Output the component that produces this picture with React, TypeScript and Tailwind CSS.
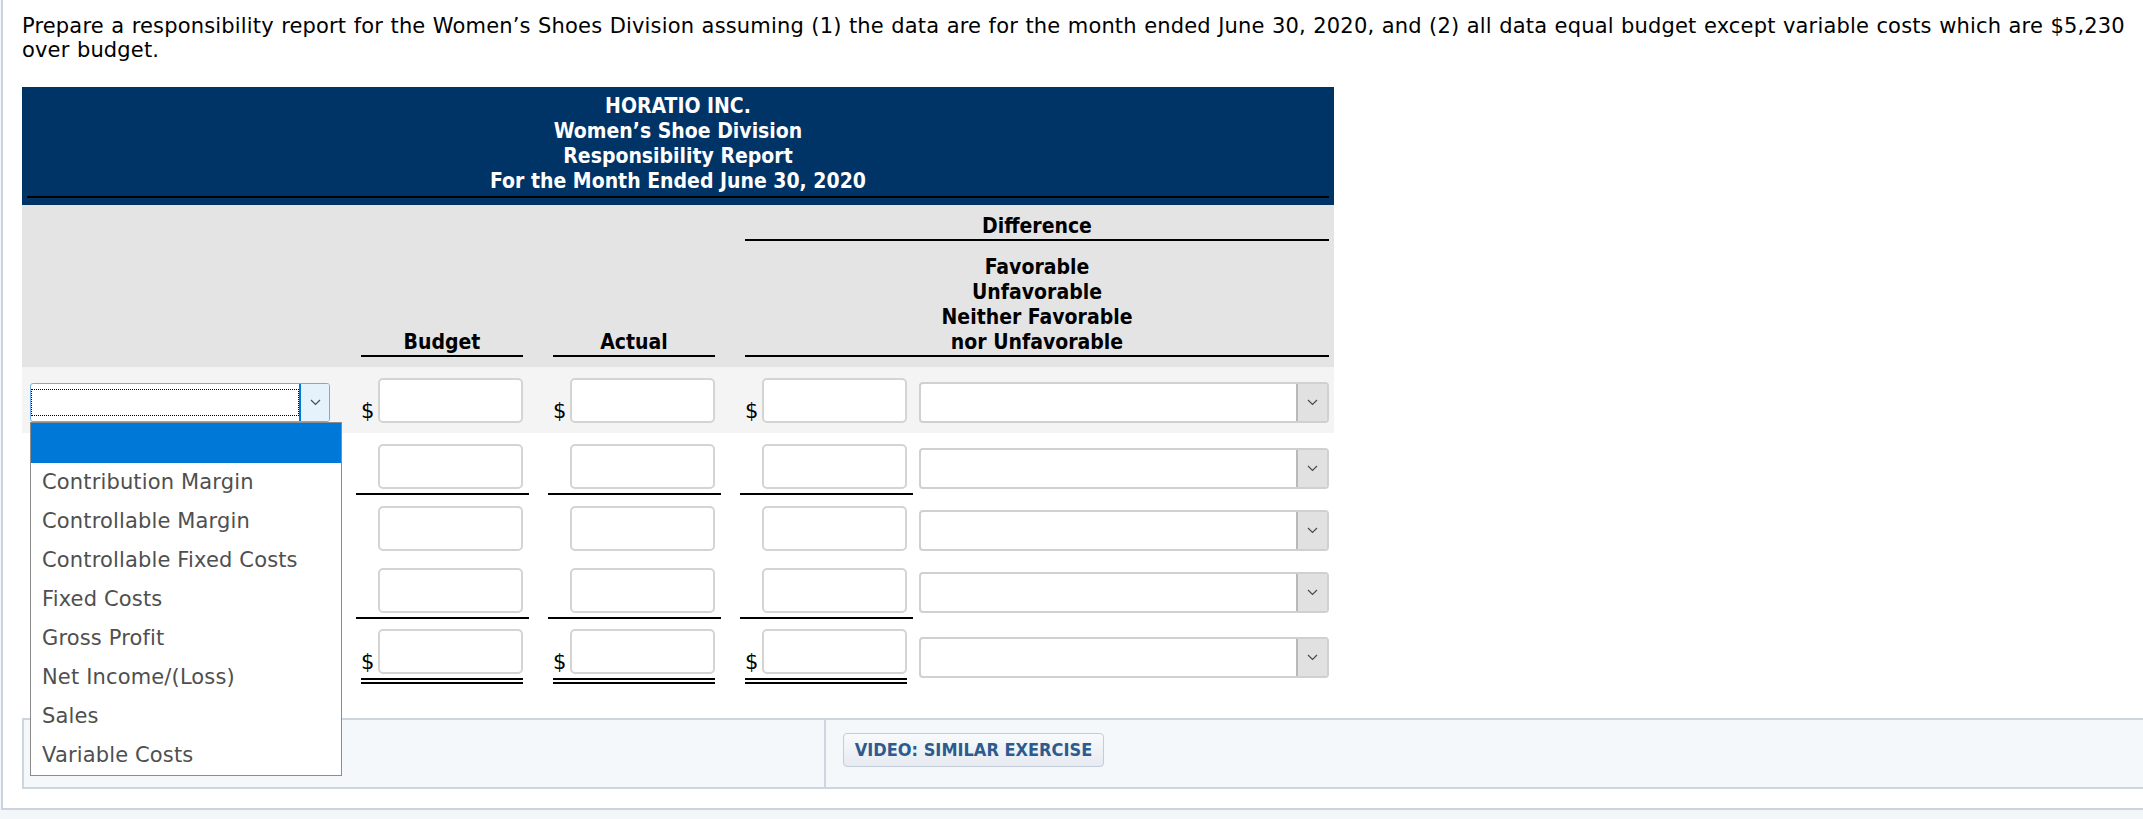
import React from "react";

const body = "font-['DejaVu_Sans','Verdana',sans-serif]";
const bold = "font-['DejaVu_Sans_Condensed','DejaVu_Sans',sans-serif] [font-stretch:condensed] font-bold";

function Chevron() {
  return (
    <svg width="11" height="7" viewBox="0 0 11 7">
      <polyline points="1,1 5.5,5.5 10,1" fill="none" stroke="#4a4a4a" strokeWidth="1.2" />
    </svg>
  );
}

function AmountInput() {
  return <div className="w-[145px] h-[45px] shrink-0 bg-white border-2 border-[#d4d4d4] rounded-[5px]" />;
}

type Line = "none" | "single" | "double";

function AmountCell({ dollar, line, pb }: { dollar: boolean; line: Line; pb: string }) {
  const wrap =
    line === "double"
      ? "ml-[15px] w-[162px] border-b-[6px] border-double border-black"
      : line === "single"
      ? "ml-[10px] w-[173px] pl-[5px] border-b-2 border-black"
      : "ml-[10px] w-[173px] pl-[5px] border-b-2 border-transparent";
  return (
    <div className={`${wrap} ${pb} flex items-end`}>
      <span className={`w-[17px] shrink-0 text-[21px] leading-[24px] text-black ${body}`}>{dollar ? "$" : ""}</span>
      <AmountInput />
    </div>
  );
}

function FuSelect({ mb }: { mb: string }) {
  return (
    <div className={`ml-[1px] ${mb} w-[410px] h-[41px] bg-white border-2 border-[#d0d0d0] rounded-[4px] flex justify-end overflow-hidden`}>
      <div className="w-[31px] h-full bg-[#e1e1e1] border-l-2 border-[#b9b9b9] flex items-center justify-center">
        <Chevron />
      </div>
    </div>
  );
}

const OPTIONS = [
  "Contribution Margin",
  "Controllable Margin",
  "Controllable Fixed Costs",
  "Fixed Costs",
  "Gross Profit",
  "Net Income/(Loss)",
  "Sales",
  "Variable Costs",
];

const cols = "grid grid-cols-[324px_192px_192px_188px_416px]";

export default function App() {
  return (
    <div className="min-h-screen bg-[#f4f7fa]">
      <div className="ml-[1px] h-[810px] bg-white border-l-2 border-b-2 border-[#cbd3de] flex flex-col pl-[19px] pt-[14px]">
        <p className={`pr-[10px] text-[21px] leading-[24px] tracking-[0.16px] [word-spacing:0.6px] text-black ${body}`}>
          Prepare a responsibility report for the Women’s Shoes Division assuming (1) the data are for the month ended June 30, 2020, and (2) all data equal budget except variable costs which are $5,230 over budget.
        </p>

        <div className="mt-[25px] w-[1312px]">
          {/* Blue title */}
          <div className="bg-[#003366] px-[5px] pt-[7px] pb-[7px]">
            <div className={`border-b-2 border-black pb-[2px] text-center text-white text-[21px] leading-[25px] ${bold}`}>
              <div>HORATIO INC.</div>
              <div>Women’s Shoe Division</div>
              <div>Responsibility Report</div>
              <div>For the Month Ended June 30, 2020</div>
            </div>
          </div>

          {/* Column headers */}
          <div className={`bg-[#e4e4e4] pb-[10px] text-black text-[21px] leading-[25px] ${bold}`}>
            <div className={cols}>
              <div className="col-span-3" />
              <div className="col-span-2 ml-[15px] mr-[5px] pt-[9px] border-b-2 border-black text-center">Difference</div>
            </div>
            <div className={`${cols} items-end`}>
              <div />
              <div className="mx-[15px] border-b-2 border-black text-center">Budget</div>
              <div className="mx-[15px] border-b-2 border-black text-center">Actual</div>
              <div className="col-span-2 ml-[15px] mr-[5px] pt-[14px] border-b-2 border-black text-center">
                <div>Favorable</div>
                <div>Unfavorable</div>
                <div>Neither Favorable</div>
                <div>nor Unfavorable</div>
              </div>
            </div>
          </div>

          {/* Row 1 */}
          <div className={`${cols} items-end bg-[#f4f4f4] pt-[11px] relative z-10`}>
            <div className="pl-[8px] mb-[11px]">
              <div className="relative w-[300px] h-[39px] bg-white border border-[#6eaee8] rounded-[3px] flex">
                <div className="flex-1 mt-[5px] mb-[5px] border border-dotted border-black" />
                <div className="w-[30px] h-full bg-[#e5f1fb] border-l-2 border-[#0078d7] flex items-center justify-center rounded-r-[2px]">
                  <Chevron />
                </div>
                <div className={`absolute left-[-1px] top-[38px] w-[312px] bg-white border border-[#8c8c8c] ${body}`}>
                  <div className="h-[40px] bg-[#0078d7]" />
                  {OPTIONS.map((o) => (
                    <div key={o} className="h-[39px] flex items-center pl-[11px] text-[21px] tracking-[0.15px] text-[#4f4f4f] leading-none">
                      {o}
                    </div>
                  ))}
                </div>
              </div>
            </div>
            <AmountCell dollar line="none" pb="pb-[8px]" />
            <AmountCell dollar line="none" pb="pb-[8px]" />
            <AmountCell dollar line="none" pb="pb-[8px]" />
            <FuSelect mb="mb-[10px]" />
          </div>

          {/* Row 2 */}
          <div className={`${cols} items-end pt-[11px]`}>
            <div />
            <AmountCell dollar={false} line="single" pb="pb-[4px]" />
            <AmountCell dollar={false} line="single" pb="pb-[4px]" />
            <AmountCell dollar={false} line="single" pb="pb-[4px]" />
            <FuSelect mb="mb-[6px]" />
          </div>

          {/* Row 3 */}
          <div className={`${cols} items-end pt-[11px]`}>
            <div />
            <AmountCell dollar={false} line="none" pb="pb-[4px]" />
            <AmountCell dollar={false} line="none" pb="pb-[4px]" />
            <AmountCell dollar={false} line="none" pb="pb-[4px]" />
            <FuSelect mb="mb-[6px]" />
          </div>

          {/* Row 4 */}
          <div className={`${cols} items-end pt-[11px]`}>
            <div />
            <AmountCell dollar={false} line="single" pb="pb-[4px]" />
            <AmountCell dollar={false} line="single" pb="pb-[4px]" />
            <AmountCell dollar={false} line="single" pb="pb-[4px]" />
            <FuSelect mb="mb-[6px]" />
          </div>

          {/* Row 5 */}
          <div className={`${cols} items-end pt-[10px]`}>
            <div />
            <AmountCell dollar line="double" pb="pb-[4px]" />
            <AmountCell dollar line="double" pb="pb-[4px]" />
            <AmountCell dollar line="double" pb="pb-[4px]" />
            <FuSelect mb="mb-[6px]" />
          </div>
        </div>

        {/* Bottom panel */}
        <div className="mt-[34px] h-[71px] bg-[#f5f8fb] border-y-2 border-l-2 border-[#cdd5df] flex">
          <div className="w-[802px] h-full border-r-2 border-[#cdd5df]" />
          <div className="pl-[17px] pt-[13px]">
            <div className={`w-[261px] h-[34px] rounded-[4px] border border-[#c3ccd7] bg-gradient-to-b from-[#f8fafc] to-[#e6ebf1] flex items-center justify-center text-[#2d5b8f] text-[18px] leading-none ${bold}`}>
              VIDEO: SIMILAR EXERCISE
            </div>
          </div>
        </div>
      </div>
    </div>
  );
}
